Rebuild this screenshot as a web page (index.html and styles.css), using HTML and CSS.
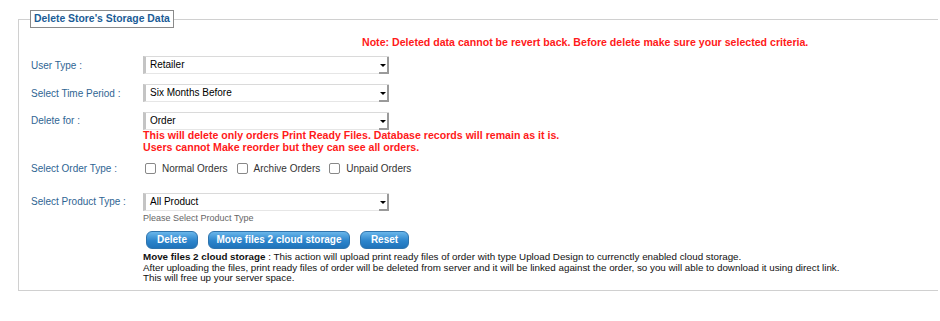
FILE: index.html
```html
<!DOCTYPE html>
<html lang="en">
<head>
    <meta charset="UTF-8">
    <title>Delete Store's Storage Data</title>
    <link rel="stylesheet" href="styles.css">
</head>
<body>
    <fieldset class="storage-box">
        <legend class="storage-legend">Delete Store's Storage Data</legend>

        <div class="note">Note: Deleted data cannot be revert back. Before delete make sure your selected criteria.</div>

        <div class="form-row">
            <label class="form-label">User Type :</label>
            <div class="select-box"><span class="select-value">Retailer</span><span class="select-arrow"></span></div>
        </div>

        <div class="form-row">
            <label class="form-label">Select Time Period :</label>
            <div class="select-box"><span class="select-value">Six Months Before</span><span class="select-arrow"></span></div>
        </div>

        <div class="form-row form-row-top">
            <label class="form-label">Delete for :</label>
            <div class="field-col">
                <div class="select-box"><span class="select-value">Order</span><span class="select-arrow"></span></div>
                <div class="warning">This will delete only orders Print Ready Files. Database records will remain as it is.<br>Users cannot Make reorder but they can see all orders.</div>
            </div>
        </div>

        <div class="form-row order-type-row">
            <label class="form-label">Select Order Type :</label>
            <div class="check-list">
                <label class="check-item"><span class="check-box"></span>Normal Orders</label>
                <label class="check-item"><span class="check-box"></span>Archive Orders</label>
                <label class="check-item"><span class="check-box"></span>Unpaid Orders</label>
            </div>
        </div>

        <div class="form-row form-row-top product-row">
            <label class="form-label">Select Product Type :</label>
            <div class="field-col">
                <div class="select-box"><span class="select-value">All Product</span><span class="select-arrow"></span></div>
                <div class="hint">Please Select Product Type</div>
            </div>
        </div>

        <div class="actions">
            <button class="btn btn-delete">Delete</button>
            <button class="btn btn-move">Move files 2 cloud storage</button>
            <button class="btn btn-reset">Reset</button>
        </div>

        <div class="description">
            <strong>Move files 2 cloud storage</strong> : This action will upload print ready files of order with type Upload Design to currenctly enabled cloud storage.<br>
            After uploading the files, print ready files of order will be deleted from server and it will be linked against the order, so you will able to download it using direct link.<br>
            This will free up your server space.
        </div>
    </fieldset>
</body>
</html>
```

FILE: styles.css
```css
/* Base styles */
body {
    font-family: "Liberation Sans", Arial, sans-serif;
    font-size: 10px;
    margin: 0;
    padding: 0;
    background-color: #fff;
    color: #000;
}

.storage-box {
    border: 1px solid #d0d0d0;
    border-right: none;
    margin: 10px 2px 0 18px;
    padding: 0 0 6px 12px;
    min-width: 0;
}

.storage-legend {
    border: 1px solid #8a8a8a;
    padding: 2px 3px 2px 3px;
    margin-left: -1px;
    color: #1b5c96;
    font-weight: bold;
    font-size: 10.4px;
    line-height: 12px;
}

.note {
    color: #ff1a1a;
    font-weight: bold;
    font-size: 10.6px;
    line-height: 14px;
    margin: 7px 0 7px 331px;
}

.form-row {
    display: flex;
    align-items: center;
    margin-bottom: 10px;
}

.form-row-top {
    align-items: flex-start;
}

.form-row-top .form-label {
    line-height: 18px;
}

.form-label {
    width: 112px;
    color: #2f6593;
    flex-shrink: 0;
}

.field-col {
    display: flex;
    flex-direction: column;
}

.select-box {
    width: 246px;
    height: 18px;
    box-sizing: border-box;
    display: flex;
    align-items: center;
    border-top: 1px solid #dadada;
    border-left: 3px solid #c4c4c4;
    border-bottom: 1px solid #e6e6e6;
    background: #fff;
}

.select-value {
    flex: 1;
    padding-left: 4px;
    color: #000;
    line-height: 16px;
}

.select-arrow {
    position: relative;
    width: 10px;
    height: 17px;
    box-sizing: border-box;
    border-right: 2px solid #9a9a9a;
    border-bottom: 2px solid #9a9a9a;
    align-self: flex-start;
}

.select-arrow::after {
    content: "";
    position: absolute;
    left: 1px;
    top: 7px;
    border-left: 3px solid transparent;
    border-right: 3px solid transparent;
    border-top: 3px solid #000;
}

.warning {
    color: #ff1a1a;
    font-weight: bold;
    font-size: 10.6px;
    line-height: 12px;
    margin-top: -1px;
}

.order-type-row {
    margin-top: 9px;
    margin-bottom: 19px;
}

.check-list {
    display: flex;
    gap: 9px;
    padding-left: 2px;
}

.check-item {
    display: flex;
    align-items: center;
    color: #333;
}

.check-box {
    width: 9px;
    height: 9px;
    border: 1px solid #888;
    border-radius: 2px;
    margin-right: 6px;
    background: #fff;
}

.product-row {
    margin-bottom: 0;
}

.hint {
    color: #666;
    font-size: 9px;
    line-height: 12px;
    margin-top: 1px;
}

.actions {
    display: flex;
    gap: 10px;
    margin: 7px 0 0 115px;
}

.btn {
    height: 18px;
    padding: 0;
    border: 1px solid #2f74ad;
    border-radius: 6px;
    background: linear-gradient(#6ab6ea, #2c85cc 55%, #1f73ba);
    color: #fff;
    font-family: "Liberation Sans", Arial, sans-serif;
    font-size: 10px;
    font-weight: bold;
    line-height: 16px;
}

.btn-delete {
    width: 52px;
}

.btn-move {
    width: 142px;
}

.btn-reset {
    width: 49px;
}

.description {
    margin: 3px 0 0 112px;
    font-size: 9.8px;
    line-height: 10.5px;
    color: #111;
}
```
